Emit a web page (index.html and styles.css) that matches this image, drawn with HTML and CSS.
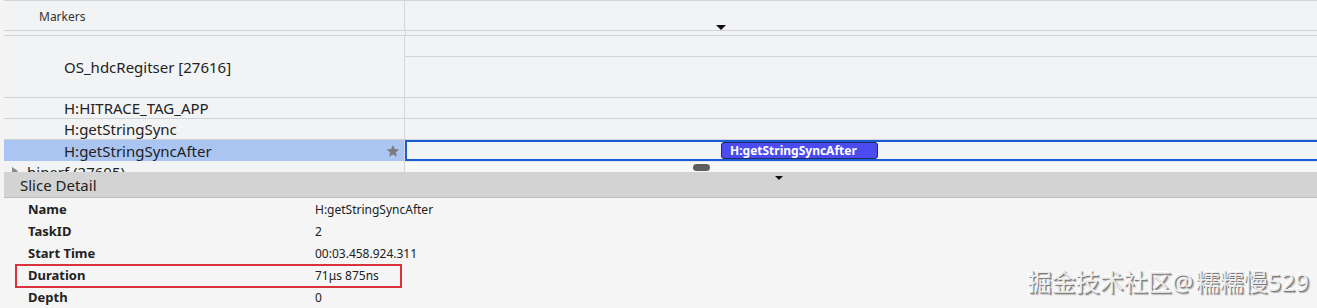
FILE: index.html
```html
<!DOCTYPE html>
<html lang="zh">
<head>
<meta charset="utf-8">
<title>Trace</title>
<link rel="stylesheet" href="styles.css">
</head>
<body>
<div class="page">
  <div class="trace">
    <div class="row row-markers">
      <div class="cell-left"><span class="markers-label">Markers</span></div>
      <div class="cell-right"><span class="flag"></span></div>
    </div>
    <div class="spacer"></div>
    <div class="row row-process">
      <div class="cell-left"><span class="name">OS_hdcRegitser [27616]</span></div>
      <div class="cell-right col">
        <div class="sub-top"></div>
        <div class="sub-bottom"></div>
      </div>
    </div>
    <div class="row row-thread">
      <div class="cell-left"><span class="name">H:HITRACE_TAG_APP</span></div>
      <div class="cell-right"></div>
    </div>
    <div class="row row-thread">
      <div class="cell-left"><span class="name">H:getStringSync</span></div>
      <div class="cell-right"></div>
    </div>
    <div class="row row-selected">
      <div class="cell-left">
        <span class="name">H:getStringSyncAfter</span>
        <svg class="star" width="14" height="14" viewBox="0 0 24 24"><path d="M12 1.5l3.1 7.1 7.6.7-5.8 5 1.8 7.5L12 17.8l-6.7 4 1.8-7.5-5.8-5 7.6-.7z" fill="#7b7b7b"/></svg>
      </div>
      <div class="cell-right">
        <div class="slice">H:getStringSyncAfter</div>
      </div>
    </div>
    <div class="row row-hiperf">
      <div class="cell-left">
        <span class="tri-right"></span><span class="hiperf-name">hiperf (27605)</span>
      </div>
      <div class="cell-right"><span class="pill"></span></div>
    </div>
  </div>
  <div class="detail">
    <div class="detail-head">
      <span class="detail-title">Slice Detail</span>
      <span class="tri-down"></span>
    </div>
    <div class="detail-body">
      <div class="drow"><span class="dlabel">Name</span><span class="dval">H:getStringSyncAfter</span></div>
      <div class="drow"><span class="dlabel">TaskID</span><span class="dval">2</span></div>
      <div class="drow"><span class="dlabel">Start Time</span><span class="dval">00:03.458.924.311</span></div>
      <div class="drow"><span class="dlabel">Duration</span><span class="dval">71μs 875ns</span></div>
      <div class="drow"><span class="dlabel">Depth</span><span class="dval">0</span></div>
      <div class="highlight"></div>
      <div class="watermark">掘金技术社区@&#8202;糯糯慢529</div>
    </div>
  </div>
</div>
</body>
</html>
```
FILE: styles.css
```css
* { box-sizing: border-box; }
html, body { margin: 0; padding: 0; }
body {
  width: 1317px;
  height: 308px;
  overflow: hidden;
  background: #f4f4f5;
  font-family: "Noto Sans", "Noto Sans CJK SC", sans-serif;
  color: #222;
}
.page {
  margin-left: 4px;
  height: 308px;
  display: flex;
  flex-direction: column;
}
.trace {
  height: 172px;
  overflow: hidden;
  background: #f2f3f5;
  border-top: 1px solid #d2d3d6;
  flex: none;
}
.row {
  display: flex;
}
.cell-left {
  width: 401px;
  flex: none;
  border-right: 1px solid #d6d7da;
  display: flex;
  align-items: center;
  position: relative;
}
.cell-right {
  flex: 1;
  position: relative;
}
.row-markers {
  height: 30px;
  border-bottom: 1px solid #d2d3d6;
}
.markers-label {
  font-size: 12px;
  padding-left: 35px;
  padding-top: 2px;
  color: #333;
}
.flag {
  position: absolute;
  left: 311px;
  bottom: 0;
  width: 0;
  height: 0;
  border-left: 5px solid transparent;
  border-right: 5px solid transparent;
  border-top: 5px solid #111;
}
.spacer {
  height: 4px;
  display: flex;
}
.spacer::before {
  content: "";
  width: 401px;
  border-right: 1px solid #d6d7da;
}
.row-process {
  height: 63px;
  border-top: 1px solid #d2d3d6;
  border-bottom: 1px solid #d2d3d6;
}
.name {
  font-size: 15px;
  padding-left: 60px;
  color: #222;
}
.col {
  display: flex;
  flex-direction: column;
}
.sub-top {
  height: 21px;
  border-bottom: 1px solid #d2d3d6;
}
.sub-bottom { flex: 1; }
.row-thread {
  height: 21px;
  border-bottom: 1px solid #d2d3d6;
}
.row-selected {
  height: 21px;
}
.row-selected .cell-left {
  background: #abc5f3;
}
.star {
  position: absolute;
  left: 382px;
  top: 4px;
}
.row-selected .cell-right {
  border: 2px solid #1a5bd6;
  border-right: none;
  background: #f2f3f5;
}
.slice {
  position: absolute;
  left: 314px;
  top: 0;
  width: 157px;
  height: 17px;
  background: #4b4bf0;
  border: 1px solid #1f2a6b;
  border-radius: 3px;
  color: #fff;
  font-size: 12px;
  font-weight: 700;
  line-height: 15px;
  padding-left: 8px;
  white-space: nowrap;
}
.row-hiperf {
  height: 22px;
}
.row-hiperf .cell-left {
  align-items: flex-start;
}
.tri-right {
  margin-left: 8px;
  margin-top: 6px;
  width: 0;
  height: 0;
  border-top: 4px solid transparent;
  border-bottom: 4px solid transparent;
  border-left: 6px solid #8a8a8a;
}
.hiperf-name {
  font-size: 15px;
  margin-left: 9px;
  margin-top: 1px;
  line-height: 20px;
  color: #222;
}
.row-hiperf .cell-right {
  background: #f7f8fa;
  border-top: 1px solid #e4e4e6;
}
.pill {
  position: absolute;
  left: 288px;
  top: 2px;
  width: 17px;
  height: 7px;
  border-radius: 4px;
  background: #5e5e5e;
}
.detail {
  flex: 1;
  display: flex;
  flex-direction: column;
}
.detail-head {
  height: 26px;
  background: #d3d3d3;
  border-bottom: 1px solid #bdbdbd;
  position: relative;
  display: flex;
  align-items: center;
  flex: none;
}
.detail-title {
  font-size: 15px;
  padding-left: 16px;
  color: #222;
}
.tri-down {
  position: absolute;
  left: 771px;
  top: 4px;
  width: 0;
  height: 0;
  border-left: 4px solid transparent;
  border-right: 4px solid transparent;
  border-top: 4px solid #111;
}
.detail-body {
  flex: 1;
  position: relative;
  background: #f5f5f6;
}
.drow {
  height: 22px;
  display: flex;
  align-items: center;
}
.dlabel {
  width: 311px;
  padding-left: 24px;
  font-size: 13px;
  font-weight: 700;
  color: #222;
}
.dval {
  font-size: 12px;
  color: #222;
}
.highlight {
  position: absolute;
  left: 11px;
  top: 66px;
  width: 387px;
  height: 24px;
  border: 2px solid #d8323c;
}
.watermark {
  position: absolute;
  right: 8px;
  top: 65px;
  font-size: 24px;
  color: #ececec;
  white-space: nowrap;
  text-shadow: 1px 1px 0 #7a7a7a, -1px -1px 0 #ffffff, 2px 2px 1px #b0b0b0;
}
```
